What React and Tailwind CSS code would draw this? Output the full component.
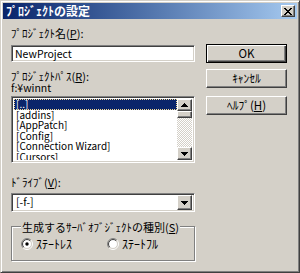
import React from "react";

const raised =
  "border border-t-white border-l-white border-b-[#404040] border-r-[#404040] shadow-[inset_-1px_-1px_0_#808080] bg-[#d4d0c8]";
const sunken =
  "border border-t-[#808080] border-l-[#808080] border-b-white border-r-white shadow-[inset_1px_1px_0_#404040,inset_-1px_-1px_0_#d4d0c8]";

function Tri({ up }) {
  return (
    <svg width="7" height="4" viewBox="0 0 7 4" shapeRendering="crispEdges">
      {up ? (
        <path d="M3 0h1v1H3zM2 1h3v1H2zM1 2h5v1H1zM0 3h7v1H0z" fill="#000" />
      ) : (
        <path d="M0 0h7v1H0zM1 1h5v1H1zM2 2h3v1H2zM3 3h1v1H3z" fill="#000" />
      )}
    </svg>
  );
}

function CloseX() {
  return (
    <svg width="8" height="7" viewBox="0 0 8 7" shapeRendering="crispEdges">
      <path
        d="M0 0h2v1H0zM6 0h2v1H6zM1 1h2v1H1zM5 1h2v1H5zM2 2h4v1H2zM3 3h2v1H3zM2 4h4v1H2zM1 5h2v1H1zM5 5h2v1H5zM0 6h2v1H0zM6 6h2v1H6z"
        fill="#000"
      />
    </svg>
  );
}

function Radio({ checked }) {
  const c = 6;
  const r1 = 5.5;
  const r2 = 4.5;
  const k = 0.7071;
  const arc = (r, a) => {
    const x1 = c - r * k, y1 = c + r * k, x2 = c + r * k, y2 = c - r * k;
    return a
      ? `M${x1} ${y1} A${r} ${r} 0 0 1 ${x2} ${y2}`
      : `M${x2} ${y2} A${r} ${r} 0 0 1 ${x1} ${y1}`;
  };
  return (
    <svg width="12" height="12" viewBox="0 0 12 12" className="shrink-0">
      <circle cx={c} cy={c} r="4.5" fill="#fff" />
      <path d={arc(r1, true)} stroke="#808080" fill="none" />
      <path d={arc(r1, false)} stroke="#fff" fill="none" />
      <path d={arc(r2, true)} stroke="#404040" fill="none" />
      <path d={arc(r2, false)} stroke="#d4d0c8" fill="none" />
      {checked && <circle cx={c} cy={c} r="1.7" fill="#000" />}
    </svg>
  );
}

function Btn({ children, def, className = "" }) {
  return (
    <div
      className={
        "h-[19px] w-[81px] flex items-center justify-center leading-none text-black text-[11.5px] " +
        (def
          ? "border border-black bg-[#d4d0c8] shadow-[inset_1px_1px_0_#fff,inset_-1px_-1px_0_#404040,inset_-2px_-2px_0_#808080] "
          : raised + " ") +
        className
      }
    >
      {children}
    </div>
  );
}

const items = [
  "[..]",
  "[addins]",
  "[AppPatch]",
  "[Config]",
  "[Connection Wizard]",
  "[Cursors]",
  "[Debug]",
];

export default function App() {
  return (
    <div className="w-[300px] h-[273px] bg-[#d4d0c8] border border-t-[#d4d0c8] border-l-[#d4d0c8] border-b-[#404040] border-r-[#404040] shadow-[inset_1px_1px_0_#fff,inset_-1px_-1px_0_#808080] p-[2px] flex flex-col font-['Noto_Sans_CJK_JP',sans-serif] text-[11px] text-black">
      {/* title bar */}
      <div className="h-[16px] shrink-0 flex items-center justify-between pl-[3px] pr-[2px] bg-linear-to-r from-[#0a246a] to-[#a6caf0]">
        <span className="text-white font-bold text-[12px] leading-none">
          ﾌﾟﾛｼﾞｪｸﾄの設定
        </span>
        <div className={"w-[14px] h-[12px] flex items-center justify-center " + raised}>
          <CloseX />
        </div>
      </div>

      {/* body */}
      <div className="flex flex-row pl-[8px] gap-[11px]">
        {/* left column */}
        <div className="w-[184px] flex flex-col pt-[7px]">
          <div className="h-[14px] leading-[14px]">
            ﾌﾟﾛｼﾞｪｸﾄ名(<span className="underline">P</span>):
          </div>
          <div className={"mt-[5px] h-[17px] bg-white flex items-center pl-[3px] text-[10.5px] " + sunken}>
            NewProject
          </div>
          <div className="mt-[8px] h-[12px] leading-[12px]">
            ﾌﾟﾛｼﾞｪｸﾄﾊﾟｽ(<span className="underline">R</span>):
          </div>
          <div className="h-[12px] leading-[12px] text-[10.5px]">f:¥winnt</div>
          <div className={"mt-[2px] h-[67px] bg-white flex flex-row p-[2px] " + sunken}>
            <div className="flex-1 overflow-hidden flex flex-col">
              {items.map((t, i) => (
                <div
                  key={t}
                  className={
                    "h-[10.5px] shrink-0 leading-[10.5px] text-[10px] pl-[2px] whitespace-nowrap " +
                    (i === 0
                      ? "bg-[#0a246a] text-white outline outline-1 outline-dotted outline-[#f5db95] -outline-offset-1"
                      : "")
                  }
                >
                  {t}
                </div>
              ))}
            </div>
            <div className="w-[15px] flex flex-col bg-[image:repeating-conic-gradient(#d4d0c8_0%_25%,#ffffff_0%_50%)] bg-[length:2px_2px]">
              <div className={"h-[12px] flex items-center justify-center " + raised}>
                <Tri up />
              </div>
              <div className={"h-[7px] " + raised}></div>
              <div className="flex-1"></div>
              <div className={"h-[13px] flex items-center justify-center " + raised}>
                <Tri />
              </div>
            </div>
          </div>
          <div className="mt-[13px] h-[13px] leading-[13px]">
            ﾄﾞﾗｲﾌﾞ(<span className="underline">V</span>):
          </div>
          <div className={"mt-[4px] h-[19px] bg-white flex flex-row items-center p-[2px] " + sunken}>
            <div className="flex-1 pl-[2px] leading-none text-[10.5px]">[-f-]</div>
            <div className={"w-[15px] h-[15px] flex items-center justify-center " + raised}>
              <Tri />
            </div>
          </div>
          <div className="mt-[14px] h-[35px] border border-[#808080] shadow-[inset_1px_1px_0_#fff,1px_1px_0_#fff] flex flex-col pl-[9px]">
            <div className="-mt-[7px] h-[14px] leading-[14px] w-fit px-[1px] bg-[#d4d0c8]">
              生成するｻｰﾊﾞｵﾌﾞｼﾞｪｸﾄの種別(<span className="underline">S</span>)
            </div>
            <div className="h-[20px] flex flex-row items-center text-[12px]">
              <div className="w-[86px] flex items-center gap-[3px]">
                <Radio checked />
                <span className="leading-none">ｽﾃｰﾄﾚｽ</span>
              </div>
              <div className="flex items-center gap-[3px]">
                <Radio />
                <span className="leading-none">ｽﾃｰﾄﾌﾙ</span>
              </div>
            </div>
          </div>
        </div>

        {/* right column */}
        <div className="flex flex-col pt-[25px]">
          <Btn def>OK</Btn>
          <Btn className="mt-[6px]">ｷｬﾝｾﾙ</Btn>
          <Btn className="mt-[8px]">
            ﾍﾙﾌﾟ(<span className="underline">H</span>)
          </Btn>
        </div>
      </div>
    </div>
  );
}
